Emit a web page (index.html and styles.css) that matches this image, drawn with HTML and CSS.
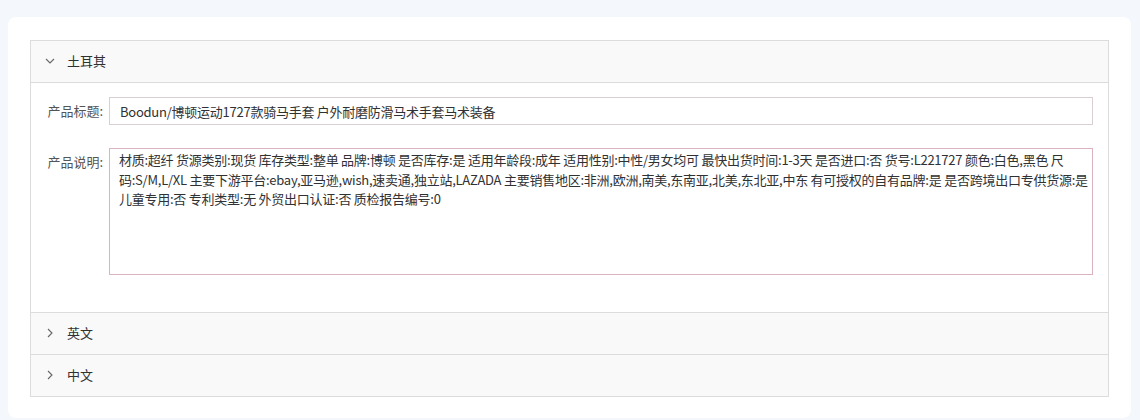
FILE: index.html
```html
<!DOCTYPE html>
<html lang="zh-CN">
<head>
  <meta charset="UTF-8">
  <meta name="viewport" content="width=device-width, initial-scale=1.0">
  <title>产品信息</title>
  <link rel="stylesheet" href="styles.css">
</head>
<body>
  <div class="page">
    <div class="card">
      <div class="collapse">

        <!-- 土耳其 (open) -->
        <div class="collapse-item is-open">
          <div class="collapse-header">
            <svg class="arrow" width="10" height="10" viewBox="0 0 10 10"><path d="M1 3 L5 7 L9 3" fill="none" stroke="#666" stroke-width="1.1"/></svg>
            <span>土耳其</span>
          </div>
          <div class="collapse-content">
            <div class="form-item">
              <label class="form-label">产品标题:</label>
              <input class="form-input" type="text" value="Boodun/博顿运动1727款骑马手套 户外耐磨防滑马术手套马术装备">
            </div>
            <div class="form-item">
              <label class="form-label">产品说明:</label>
              <textarea class="form-textarea" wrap="off">材质:超纤 货源类别:现货 库存类型:整单 品牌:博顿 是否库存:是 适用年龄段:成年 适用性别:中性/男女均可 最快出货时间:1-3天 是否进口:否 货号:L221727 颜色:白色,黑色 尺
码:S/M,L/XL 主要下游平台:ebay,亚马逊,wish,速卖通,独立站,LAZADA 主要销售地区:非洲,欧洲,南美,东南亚,北美,东北亚,中东 有可授权的自有品牌:是 是否跨境出口专供货源:是
儿童专用:否 专利类型:无 外贸出口认证:否 质检报告编号:0</textarea>
            </div>
          </div>
        </div>

        <div class="collapse-item">
          <div class="collapse-header">
            <svg class="arrow" width="10" height="10" viewBox="0 0 10 10"><path d="M3 1 L7 5 L3 9" fill="none" stroke="#666" stroke-width="1.1"/></svg>
            <span>英文</span>
          </div>
        </div>

        <div class="collapse-item">
          <div class="collapse-header">
            <svg class="arrow" width="10" height="10" viewBox="0 0 10 10"><path d="M3 1 L7 5 L3 9" fill="none" stroke="#666" stroke-width="1.1"/></svg>
            <span>中文</span>
          </div>
        </div>

      </div>
    </div>
  </div>
</body>
</html>
```

FILE: styles.css
```css
:root {
  --bg: #f4f7fb;
  --line: #dcdcdc;
  --head: #f9f9f9;
  --text: #303133;
  --label: #555;
}

* {
  margin: 0;
  padding: 0;
  box-sizing: border-box;
}

body {
  background: var(--bg);
  font-family: 'Noto Sans CJK SC', 'Noto Sans', sans-serif;
  font-size: 13px;
  color: var(--text);
}

.page {
  padding: 17px 9px 2px 8px;
}

.card {
  background: #fff;
  border-radius: 8px;
  padding: 23px 22px 21px;
}

.collapse {
  border: 1px solid var(--line);
}

.collapse-item + .collapse-item {
  border-top: 1px solid var(--line);
}

.collapse-header {
  height: 41px;
  display: flex;
  align-items: center;
  gap: 12px;
  padding: 0 0 2px 14px;
  background: var(--head);
}

.arrow {
  flex: none;
}

.collapse-content {
  border-top: 1px solid var(--line);
  background: #fff;
  padding: 14px 15px 15px;
}

.form-item {
  display: flex;
  align-items: flex-start;
  margin-bottom: 23px;
}

.form-item:last-child {
  margin-bottom: 22px;
}

.form-label {
  width: 63px;
  flex: none;
  padding-right: 6px;
  text-align: right;
  line-height: 28px;
  color: var(--label);
}

.form-input,
.form-textarea {
  flex: 1;
  font: inherit;
  letter-spacing: -0.25px;
  color: var(--text);
  background: #fff;
  outline: none;
}

.form-input {
  height: 28px;
  border: 1px solid #d9ced3;
  padding: 0 10px;
}

.form-textarea {
  height: 127px;
  border: 1px solid #dbb2bf;
  padding: 1px 0 1px 9px;
  line-height: 19.5px;
  resize: none;
  overflow: hidden;
  white-space: pre;
}
```
